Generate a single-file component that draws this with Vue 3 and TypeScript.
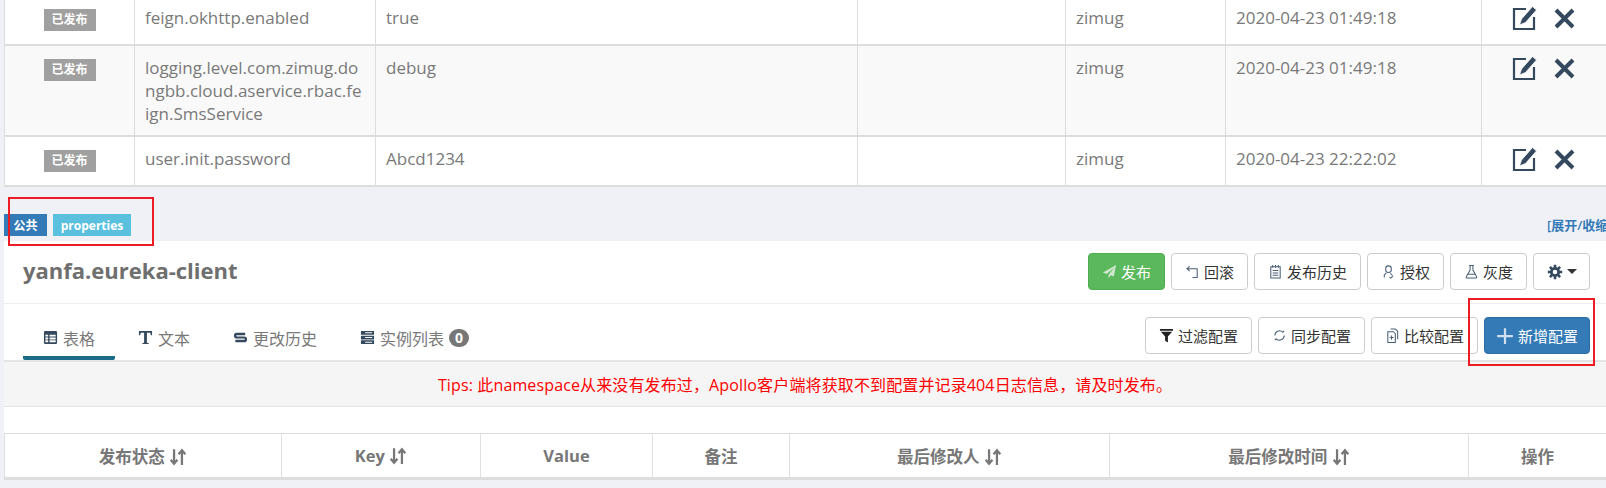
<template>
  <div class="page">
    <table class="grid top-grid">
      <colgroup>
        <col style="width: 130px" />
        <col style="width: 241px" />
        <col style="width: 482px" />
        <col style="width: 208px" />
        <col style="width: 160px" />
        <col style="width: 256px" />
        <col />
      </colgroup>
      <tbody>
        <tr v-for="row in rows" :key="row.key">
          <td class="center"><span class="label label-grey">已发布</span></td>
          <td class="key-cell">{{ row.key }}</td>
          <td>{{ row.value }}</td>
          <td></td>
          <td>zimug</td>
          <td>{{ row.time }}</td>
          <td>
            <div class="actions">
              <svg class="edit-icon" viewBox="0 0 25 24">
                <path class="line" d="M14 3H2v20h20V11" />
                <path class="solid" d="M20.500 0.500l4 3.500-11 12.500-6 2.500 2-6z" />
              </svg>
              <svg class="close-icon" viewBox="0 0 21 21">
                <path d="M2 2l17 17M19 2L2 19" />
              </svg>
            </div>
          </td>
        </tr>
      </tbody>
    </table>

    <div class="ns-head">
      <span class="label label-blue">公共</span>
      <span class="label label-cyan">properties</span>
      <a class="toggle">[展开/收缩]</a>
    </div>

    <section class="panel">
      <div class="title-row">
        <h3>yanfa.eureka-client</h3>
        <div class="btns">
          <button v-for="b in topButtons" :key="b.text" :class="{ green: b.green }">
            <svg class="btn-icon" :class="b.kind" viewBox="0 0 16 16"><path :d="b.d" /></svg>
            {{ b.text }}
          </button>
          <button class="gear">
            <svg class="gear-icon" viewBox="0 0 16 16">
              <circle cx="8" cy="8" r="3.700" />
              <path d="M8 .8v3M8 12.200v3M.8 8h3M12.200 8h3M2.900 2.900l2.200 2.200M10.900 10.900l2.200 2.200M13.100 2.900l-2.200 2.200M5.100 10.900l-2.200 2.200" />
            </svg>
            <span class="caret"></span>
          </button>
        </div>
      </div>

      <div class="tab-row">
        <ul class="tabs">
          <li v-for="t in tabs" :key="t.text" :class="{ active: t.active }">
            <svg class="tab-icon" viewBox="0 0 16 16"><path :d="t.d" /></svg>
            {{ t.text }}
            <span v-if="t.badge" class="badge">{{ t.badge }}</span>
          </li>
        </ul>
        <div class="btns">
          <button v-for="b in toolButtons" :key="b.text" :class="{ primary: b.primary }">
            <svg class="btn-icon" :class="b.kind" viewBox="0 0 16 16"><path :d="b.d" /></svg>
            {{ b.text }}
          </button>
        </div>
      </div>

      <div class="tips">Tips: 此namespace从来没有发布过，Apollo客户端将获取不到配置并记录404日志信息，请及时发布。</div>

      <table class="grid head-grid">
        <colgroup>
          <col style="width: 277px" />
          <col style="width: 199px" />
          <col style="width: 172px" />
          <col style="width: 137px" />
          <col style="width: 320px" />
          <col style="width: 359px" />
          <col />
        </colgroup>
        <thead>
          <tr>
            <th v-for="h in heads" :key="h.text">
              {{ h.text }}
              <svg v-if="h.sort" class="sort-icon" viewBox="0 0 16 16">
                <path d="M4.500 1v13M1.500 10.500l3 3.500 3-3.500M11.500 15V2M8.500 5.500l3-3.500 3 3.500" />
              </svg>
            </th>
          </tr>
        </thead>
      </table>
    </section>

    <div class="mark mark-left"></div>
    <div class="mark mark-right"></div>
  </div>
</template>

<script setup lang="ts">
const rows = [
  { key: "feign.okhttp.enabled", value: "true", time: "2020-04-23 01:49:18" },
  { key: "logging.level.com.zimug.dongbb.cloud.aservice.rbac.feign.SmsService", value: "debug", time: "2020-04-23 01:49:18" },
  { key: "user.init.password", value: "Abcd1234", time: "2020-04-23 22:22:02" },
];

const topButtons = [
  { text: "发布", green: true, kind: "fill pale", d: "M15 1 1 9l4 1.600L13 4 7 11.400V15l2.600-3 3 1.200z" },
  { text: "回滚", kind: "stroke", d: "M5 2.500 2 5l3 2.500M2.500 5H13v9.500H8" },
  { text: "发布历史", kind: "stroke", d: "M3 3h10v12H3zM5 1v3M8 1v3M11 1v3M5 7h6M5 9.500h6M5 12h6" },
  { text: "授权", kind: "stroke", d: "M8 2a3 3 0 0 1 3 3v1a3 3 0 0 1-6 0V5a3 3 0 0 1 3-3zM5.500 9.500 3.500 12v2.500M10 10l2 2M9 14l1.500 1 2.500-2.500" },
  { text: "灰度", kind: "stroke", d: "M5.500 1.500h5M6.500 1.500v5l-4 7a1 1 0 0 0 1 1.500h9a1 1 0 0 0 1-1.500l-4-7v-5M4.500 11h7" },
];

const toolButtons = [
  { text: "过滤配置", kind: "fill dark", d: "M1 1h14v2H1zM2 4h12L9.500 9v6.500l-3-2V9z" },
  { text: "同步配置", kind: "stroke", d: "M13 8a5 5 0 0 1-8.500 3.500L3 13M3 8a5 5 0 0 1 8.500-3.500L13 3" },
  { text: "比较配置", kind: "stroke", d: "M6 1h5l2.500 2.500V12M3 4h6l2 2v9.500H3zM7 8v4.500M5 10.200h4" },
  { text: "新增配置", primary: true, kind: "stroke plus", d: "M8 1v14M1 8h14" },
];

const tabs = [
  { text: "表格", active: true, d: "M2.500 1h11A1.500 1.500 0 0 1 15 2.500v11a1.500 1.500 0 0 1-1.500 1.500h-11A1.500 1.500 0 0 1 1 13.500v-11A1.500 1.500 0 0 1 2.500 1zM2.500 5v2h3V5zm4.500 0v2h6.500V5zM2.500 8v2h3V8zm4.500 0v2h6.500V8zm-4.500 3v2h3v-2zm4.500 0v2h6.500v-2z" },
  { text: "文本", d: "M1 1h14v4.500h-1.200L13 3H9.500v10.500l2 .5v1h-7v-1l2-.5V3H3l-.8 2.500H1z" },
  { text: "更改历史", d: "M4 3h9v2.500H4a.8.800 0 0 0 0 1.500h8a3 3 0 0 1 0 6H2.500v-2.500H12a.8.800 0 0 0 0-1.500H4a3 3 0 0 1 0-6z" },
  { text: "实例列表", badge: "0", d: "M1 1h14v4H1zM1 6h14v4H1zM1 11h14v4H1zM5.500 2.500v1H13v-1zm0 5v1H13v-1zm0 5v1H13v-1z" },
];

const heads = [
  { text: "发布状态", sort: true },
  { text: "Key", sort: true },
  { text: "Value" },
  { text: "备注" },
  { text: "最后修改人", sort: true },
  { text: "最后修改时间", sort: true },
  { text: "操作" },
];
</script>

<style>
html,
body {
  margin: 0;
  overflow: hidden;
}
</style>

<style scoped>
.page {
  position: relative;
  height: 488px;
  overflow: hidden;
  padding-left: 4px;
  background: #f0f1f6;
  font-family: "Open Sans", "Noto Sans CJK SC", sans-serif;
  font-size: 16px;
  color: #797979;
}

.grid {
  width: 100%;
  table-layout: fixed;
  border-collapse: collapse;
  background: #fff;
}

.top-grid {
  margin-top: -4px;
  border-bottom: 2px solid #ddd;
  font-size: 17px;
}

.top-grid td {
  padding: 10px;
  line-height: 23px;
  vertical-align: top;
  border-left: 1px solid #ddd;
  border-bottom: 2px solid #ddd;
}

.top-grid tr:nth-child(2) td {
  background: #f9f9f9;
}

.top-grid tr:last-child td {
  border-bottom: none;
}

.key-cell {
  word-break: break-all;
}

.center {
  text-align: center;
}

.label {
  display: inline-flex;
  align-items: center;
  justify-content: center;
  height: 22px;
  color: #fff;
  font-size: 12px;
  font-weight: 700;
}

.label-grey {
  width: 52px;
  background: #a0a0a0;
}

.label-blue {
  width: 43px;
  background: #337ab7;
}

.label-cyan {
  width: 78px;
  margin-left: 6px;
  background: #5bc0de;
}

.actions {
  display: flex;
  align-items: flex-start;
  gap: 17px;
  height: 28px;
  margin-left: 20px;
}

.edit-icon {
  width: 25px;
  height: 24px;
  flex-shrink: 0;
}

.edit-icon .line {
  fill: none;
  stroke: #34495e;
  stroke-width: 2.200;
}

.edit-icon .solid {
  fill: #34495e;
  stroke: #fff;
  stroke-width: 0.800;
}

.close-icon {
  width: 21px;
  height: 21px;
  margin-top: 2px;
  flex-shrink: 0;
}

.close-icon path {
  fill: none;
  stroke: #34495e;
  stroke-width: 4;
}

.ns-head {
  display: flex;
  align-items: flex-start;
  height: 54px;
  padding-top: 27px;
  box-sizing: border-box;
}

.toggle {
  margin-left: auto;
  width: 59px;
  flex-shrink: 0;
  white-space: nowrap;
  color: #337ab7;
  font-size: 13px;
  font-weight: 600;
  line-height: 22px;
}

.panel {
  background: #fff;
}

.title-row {
  display: flex;
  justify-content: space-between;
  height: 63px;
  padding: 12px 16px 0 19px;
  box-sizing: border-box;
  border-bottom: 1px solid #eee;
}

h3 {
  margin: 0;
  font-size: 22px;
  font-weight: 700;
  line-height: 34px;
  color: #6f6f6f;
}

.btns {
  display: flex;
  gap: 6px;
}

button {
  display: flex;
  align-items: center;
  justify-content: center;
  gap: 4px;
  height: 37px;
  padding: 0 13px;
  box-sizing: border-box;
  border: 1px solid #ccc;
  border-radius: 4px;
  background: #fff;
  color: #333;
  font: 15px "Open Sans", "Noto Sans CJK SC", sans-serif;
}

button.green {
  background: #5cb85c;
  border-color: #4cae4c;
  color: #fff;
}

button.primary {
  padding: 0 11px;
  background: #337ab7;
  border-color: #2e6da4;
  color: #fff;
}

button.gear {
  width: 57px;
  padding: 0;
}

.btn-icon {
  width: 15px;
  height: 15px;
  flex-shrink: 0;
}

.btn-icon.stroke path {
  fill: none;
  stroke: #4a5f78;
  stroke-width: 1.100;
}

.btn-icon.fill path {
  fill: #34495e;
  fill-rule: evenodd;
}

.btn-icon.fill.pale path {
  fill: #cfe8cf;
}

.btn-icon.fill.dark path {
  fill: #222;
}

.btn-icon.plus {
  width: 18px;
  height: 18px;
}

.btn-icon.stroke.plus path {
  stroke: #cfdff0;
  stroke-width: 2;
}

.gear-icon {
  width: 16px;
  height: 16px;
}

.gear-icon circle {
  fill: none;
  stroke: #34495e;
  stroke-width: 2.800;
}

.gear-icon path {
  fill: none;
  stroke: #34495e;
  stroke-width: 2.600;
}

.caret {
  width: 0;
  height: 0;
  border-left: 5px solid transparent;
  border-right: 5px solid transparent;
  border-top: 5px solid #333;
}

.tab-row {
  display: flex;
  justify-content: space-between;
  height: 56px;
  padding: 13px 16px 0 19px;
  box-sizing: border-box;
}

.tabs {
  display: flex;
  align-items: flex-end;
  gap: 3px;
  height: 43px;
  margin: 0;
  padding: 0;
  list-style: none;
}

.tabs li {
  display: flex;
  align-items: center;
  gap: 5px;
  height: 29px;
  padding: 0 20px 4px;
  border-bottom: 4px solid transparent;
}

.tabs li.active {
  border-bottom-color: #1a6b85;
  border-radius: 0 0 2px 2px;
}

.tab-icon {
  width: 15px;
  height: 15px;
  flex-shrink: 0;
}

.tab-icon path {
  fill: #34495e;
  fill-rule: evenodd;
}

.badge {
  display: flex;
  align-items: center;
  justify-content: center;
  width: 20px;
  height: 18px;
  border-radius: 10px;
  background: #777;
  color: #fff;
  font-size: 14px;
  font-weight: 700;
}

.tips {
  height: 47px;
  padding-top: 2px;
  box-sizing: border-box;
  border-top: 2px solid #e4e4e4;
  border-bottom: 1px solid #e4e4e4;
  background: #f5f5f5;
  color: #f00;
  text-align: center;
  letter-spacing: 0.130px;
  line-height: 42px;
}

.head-grid {
  margin-top: 26px;
  border-top: 1px solid #ddd;
  border-bottom: 3px solid #ddd;
}

.head-grid th {
  height: 43px;
  padding: 0;
  border-left: 1px solid #e0e0e0;
  font-size: 16.500px;
  font-weight: 700;
  color: #777;
}

.sort-icon {
  width: 18px;
  height: 18px;
  vertical-align: -3px;
}

.sort-icon path {
  fill: none;
  stroke: #777;
  stroke-width: 2;
}

.mark {
  position: absolute;
  box-sizing: border-box;
  border: 2px solid #ed1c24;
}

.mark-left {
  left: 8px;
  top: 197px;
  width: 146px;
  height: 49px;
}

.mark-right {
  left: 1468px;
  top: 298px;
  width: 127px;
  height: 68px;
}
</style>
